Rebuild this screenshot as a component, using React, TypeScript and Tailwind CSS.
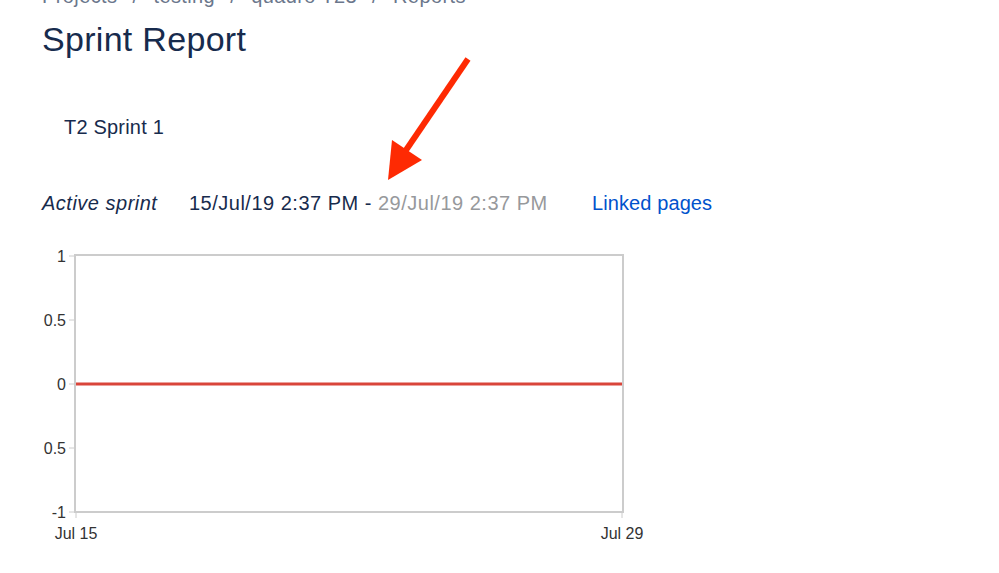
import React from "react";

const font = { fontFamily: '"Liberation Sans", Arial, sans-serif' };
const svgFont = '"Liberation Sans", Arial, sans-serif';

function Chart() {
  const left = 33;
  const right = 581;
  const top = 15;
  const bottom = 272;
  const ys = [
    { label: "1", y: 16 },
    { label: "0.5", y: 80 },
    { label: "0", y: 144 },
    { label: "0.5", y: 208 },
    { label: "-1", y: 272 },
  ];
  return (
    <svg width="640" height="310" viewBox="0 0 640 310" className="block">
      <rect x={left} y={top} width={right - left} height={bottom - top} fill="none" stroke="#cccccc" strokeWidth="2" />
      {ys.map((t, i) => (
        <g key={i}>
          <line x1={27} x2={left} y1={t.y} y2={t.y} stroke="#cccccc" strokeWidth="1" />
          <text x={24} y={t.y + 5.5} textAnchor="end" fontSize="16" fill="#333333" fontFamily={svgFont}>
            {t.label}
          </text>
        </g>
      ))}
      <line x1={34} x2={580} y1={144} y2={144} stroke="#d9453a" strokeWidth="3" />
      <line x1={34} x2={34} y1={bottom} y2={bottom + 6} stroke="#cccccc" strokeWidth="1" />
      <line x1={580} x2={580} y1={bottom} y2={bottom + 6} stroke="#cccccc" strokeWidth="1" />
      <text x={34} y={299} textAnchor="middle" fontSize="16" fill="#333333" fontFamily={svgFont}>
        Jul 15
      </text>
      <text x={580} y={299} textAnchor="middle" fontSize="16" fill="#333333" fontFamily={svgFont}>
        Jul 29
      </text>
    </svg>
  );
}

export default function App() {
  return (
    <div className="relative w-[999px] h-[573px] overflow-hidden bg-white" style={font}>
      <div className="pl-[42px]">
        <div className="mt-[-16px] h-[24px] leading-[24px] text-[20px] text-[#6b778c] flex items-center whitespace-nowrap tracking-[0.4px]">
          <span>Projects</span>
          <span className="mx-[15px]">/</span>
          <span>testing</span>
          <span className="mx-[15px]">/</span>
          <span>quadro T23</span>
          <span className="mx-[15px]">/</span>
          <span>Reports</span>
        </div>
        <h1 className="mt-[11px] h-[40px] leading-[40px] text-[34px] text-[#172b4d] tracking-[0.3px]">Sprint Report</h1>
        <div className="mt-[56px] pl-[22px] h-[24px] leading-[24px] text-[20px] text-[#172b4d] tracking-[0.2px]">T2 Sprint 1</div>
        <div className="mt-[52px] h-[24px] leading-[24px] text-[20px] flex items-center whitespace-nowrap tracking-[0.5px]">
          <span className="w-[147px] italic text-[#172b4d]">Active sprint</span>
          <span className="w-[403px] text-[#172b4d]">
            15/Jul/19 2:37 PM - <span className="text-[#97999c]">29/Jul/19 2:37 PM</span>
          </span>
          <span className="text-[#0052cc] tracking-[0.1px]">Linked pages</span>
        </div>
        <div className="mt-[25px]">
          <Chart />
        </div>
      </div>
      <svg className="absolute left-0 top-0 pointer-events-none" width="999" height="573">
        <line x1="468" y1="59" x2="402" y2="156" stroke="#fe2a03" strokeWidth="6" strokeLinecap="butt" />
        <polygon points="388,180 392,140 422,160" fill="#fe2a03" />
      </svg>
    </div>
  );
}
